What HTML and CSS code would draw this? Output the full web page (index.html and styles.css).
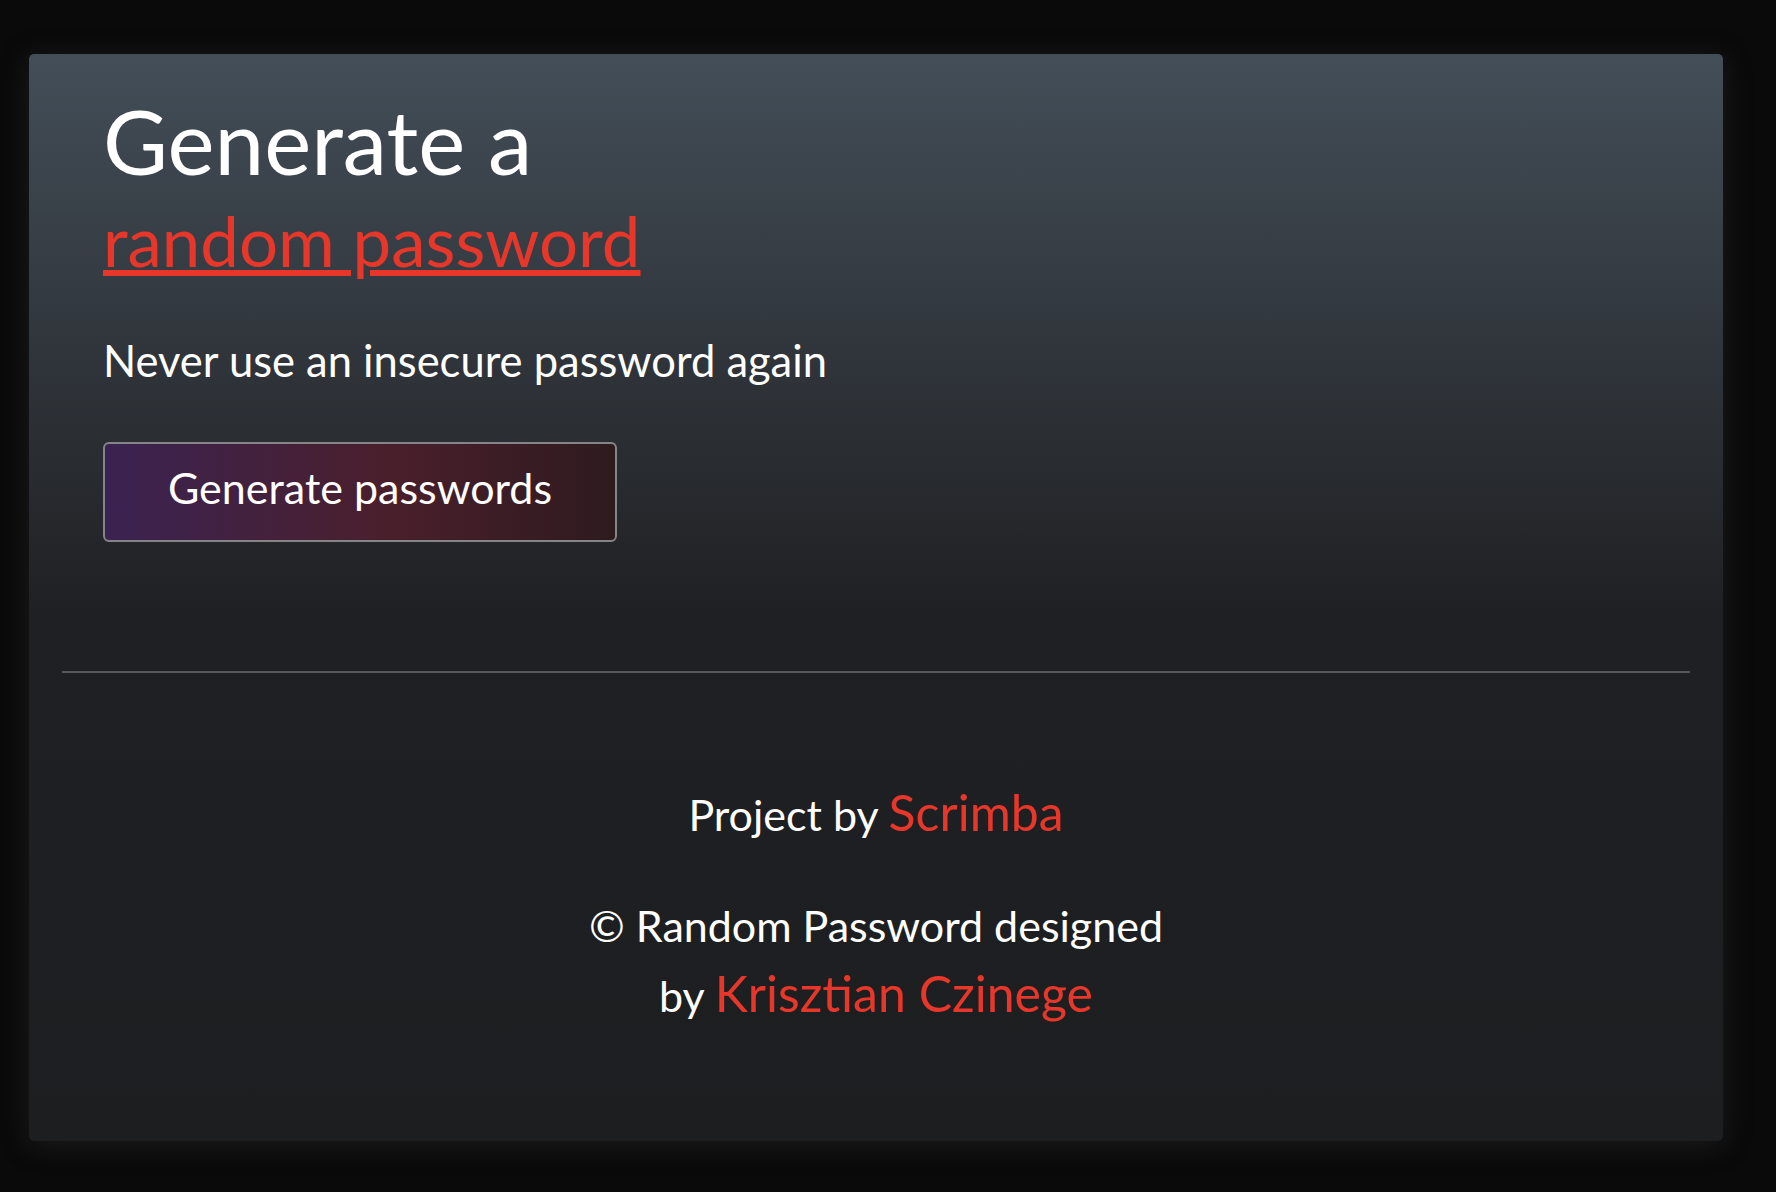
FILE: index.html
```html
<!DOCTYPE html>
<html lang="en">
<head>
<meta charset="utf-8">
<title>Random Password Generator</title>
<link rel="stylesheet" href="styles.css">
</head>
<body>
<div class="card">
  <main class="hero">
    <h1 class="title">Generate a <span class="accent">random password</span></h1>
    <p class="subtitle">Never use an insecure password again</p>
    <button class="btn" type="button">Generate passwords</button>
  </main>
  <hr class="divider">
  <footer class="footer">
    <p class="credit">Project by <a class="link" href="#">Scrimba</a></p>
    <p class="credit credit-wrap"><span class="credit-line">© Random Password designed</span> <span class="credit-line">by <a class="link" href="#">Krisztian Czinege</a></span></p>
  </footer>
</div>
</body>
</html>
```

FILE: styles.css
```css
html, body {
  margin: 0;
  padding: 0;
}

body {
  background: #0a0a0b;
  font-family: Lato, "Open Sans", sans-serif;
  color: #ffffff;
  min-height: 1192px;
  box-sizing: border-box;
  padding: 54px 53px 51px 29px;
}

.card {
  height: 1087px;
  box-sizing: border-box;
  border-radius: 5px;
  background: linear-gradient(to bottom, #434e58 0px, #30353b 300px, #1f2023 560px, #1d1e20 100%);
  box-shadow: 0 4px 28px rgba(70, 62, 62, 0.35);
  padding: 0 33px;
  display: flex;
  flex-direction: column;
}

.hero {
  padding: 39px 0 0 41px;
  height: 617px;
  box-sizing: border-box;
  flex: none;
}

.title {
  margin: 0;
  font-weight: 400;
  font-size: 89px;
  line-height: 96px;
  width: 600px;
}

.accent {
  display: block;
  padding-top: 12px;
  font-size: 69px;
  line-height: 80px;
  color: #e7372a;
  text-decoration: underline;
  text-decoration-thickness: 6px;
  text-underline-offset: 3px;
}

.subtitle {
  margin: 54px 0 0;
  font-size: 43.5px;
  line-height: 50px;
}

.btn {
  display: block;
  margin-top: 57px;
  width: 514px;
  height: 100px;
  padding: 0 0 10px;
  border: 2px solid #858588;
  border-radius: 6px;
  background: linear-gradient(90deg, #3b2352 0%, #4a1f2c 55%, #2e1b1e 100%);
  color: #ffffff;
  font-family: inherit;
  font-size: 43px;
  cursor: pointer;
}

.divider {
  margin: 0;
  border: 0;
  height: 2px;
  background: #57585a;
  flex: none;
}

.footer {
  display: flex;
  flex-direction: column;
  align-items: center;
  padding-top: 108px;
}

.credit {
  margin: 0;
  font-size: 43px;
  line-height: 68px;
  text-align: center;
}

.credit-wrap {
  margin-top: 42px;
  line-height: 70px;
}

.credit-line {
  display: block;
}

.link {
  color: #e7372a;
  font-size: 50px;
  line-height: 1;
  text-decoration: none;
}
```
